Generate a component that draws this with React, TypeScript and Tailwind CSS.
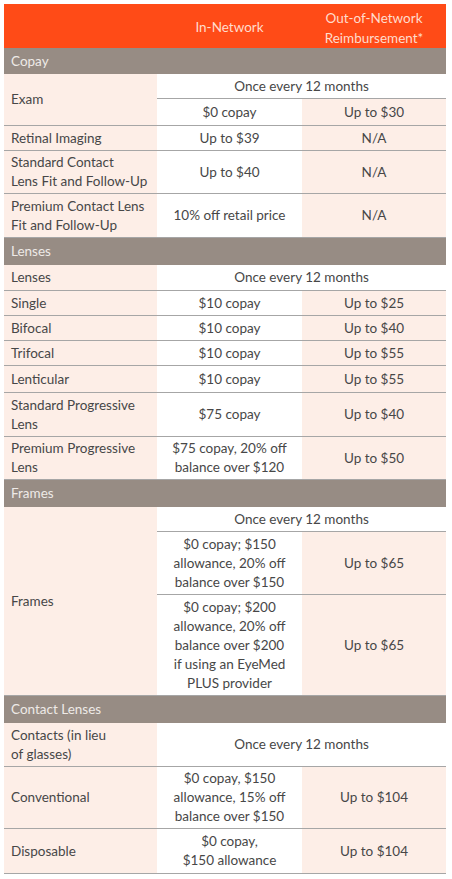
const font = { fontFamily: 'Lato, "Noto Sans", sans-serif' };

type Row = {
  label: string[];
  inNet: string[];
  outNet: string;
  h: string;
};

const Lines = ({ lines }: { lines: string[] }) => (
  <div className="whitespace-nowrap">
    {lines.map((l, i) => (
      <div key={i}>{l}</div>
    ))}
  </div>
);

const Section = ({ title, h }: { title: string; h: string }) => (
  <div className={`${h} bg-[#978c84] text-[#eeeae7] pl-[7px] flex items-center`}>{title}</div>
);

const DataRow = ({ label, inNet, outNet, h }: Row) => (
  <div className={`flex border-b border-[#a6a6a6] ${h}`}>
    <div className="w-[153px] bg-[#fdeee7] pl-[7px] flex items-center">
      <Lines lines={label} />
    </div>
    <div className="w-[145px] bg-white flex items-center justify-center text-center">
      <Lines lines={inNet} />
    </div>
    <div className="flex-1 bg-[#fdeee7] flex items-center justify-center text-center">{outNet}</div>
  </div>
);

const OnceRow = ({ label, h }: { label: string[]; h: string }) => (
  <div className={`flex border-b border-[#a6a6a6] ${h}`}>
    <div className="w-[153px] bg-[#fdeee7] pl-[7px] flex items-center">
      <Lines lines={label} />
    </div>
    <div className="flex-1 bg-white flex items-center justify-center">Once every 12 months</div>
  </div>
);

const copayRows: Row[] = [
  { label: ['Retinal Imaging'], inNet: ['Up to $39'], outNet: 'N/A', h: 'h-[25px]' },
  { label: ['Standard Contact', 'Lens Fit and Follow-Up'], inNet: ['Up to $40'], outNet: 'N/A', h: 'h-[43px]' },
  { label: ['Premium Contact Lens', 'Fit and Follow-Up'], inNet: ['10% off retail price'], outNet: 'N/A', h: 'h-[44px]' },
];

const lensRows: Row[] = [
  { label: ['Single'], inNet: ['$10 copay'], outNet: 'Up to $25', h: 'h-[25px]' },
  { label: ['Bifocal'], inNet: ['$10 copay'], outNet: 'Up to $40', h: 'h-[25px]' },
  { label: ['Trifocal'], inNet: ['$10 copay'], outNet: 'Up to $55', h: 'h-[25px]' },
  { label: ['Lenticular'], inNet: ['$10 copay'], outNet: 'Up to $55', h: 'h-[27px]' },
  { label: ['Standard Progressive', 'Lens'], inNet: ['$75 copay'], outNet: 'Up to $40', h: 'h-[44px]' },
  { label: ['Premium Progressive', 'Lens'], inNet: ['$75 copay, 20% off', 'balance over $120'], outNet: 'Up to $50', h: 'h-[43px]' },
];

const contactRows: Row[] = [
  {
    label: ['Conventional'],
    inNet: ['$0 copay, $150', 'allowance, 15% off', 'balance over $150'],
    outNet: 'Up to $104',
    h: 'h-[62px]',
  },
  { label: ['Disposable'], inNet: ['$0 copay,', '$150 allowance'], outNet: 'Up to $104', h: 'h-[45px]' },
];

export default function App() {
  return (
    <div className="w-[452px] h-[879px] bg-white pt-[4px] px-[4px]" style={font}>
      <div className="w-[442px] text-[13.5px] leading-[19px] text-[#474747]">
        {/* header */}
        <div className="flex h-[44px] bg-[#ff4b17] text-[#ffdccd]">
          <div className="w-[153px]" />
          <div className="w-[145px] flex items-center justify-center pt-[2px]">In-Network</div>
          <div className="flex-1 flex flex-col items-center justify-center leading-[20px] pt-[4px]">
            <span>Out-of-Network</span>
            <span>Reimbursement*</span>
          </div>
        </div>

        <Section title="Copay" h="h-[26px]" />
        <div className="flex h-[52px] border-b border-[#a6a6a6]">
          <div className="w-[153px] bg-[#fdeee7] pl-[7px] flex items-center">Exam</div>
          <div className="flex-1 flex flex-col">
            <div className="h-[25px] border-b border-[#a6a6a6] bg-white flex items-center justify-center">
              Once every 12 months
            </div>
            <div className="flex flex-1">
              <div className="w-[145px] bg-white flex items-center justify-center">$0 copay</div>
              <div className="flex-1 bg-[#fdeee7] flex items-center justify-center">Up to $30</div>
            </div>
          </div>
        </div>
        {copayRows.map((r) => (
          <DataRow key={r.label.join(' ')} {...r} />
        ))}

        <Section title="Lenses" h="h-[27px]" />
        <OnceRow label={['Lenses']} h="h-[26px]" />
        {lensRows.map((r) => (
          <DataRow key={r.label.join(' ')} {...r} />
        ))}

        <Section title="Frames" h="h-[27px]" />
        <div className="flex h-[189px] border-b border-[#a6a6a6]">
          <div className="w-[153px] bg-[#fdeee7] pl-[7px] flex items-center">Frames</div>
          <div className="flex-1 flex flex-col">
            <div className="h-[25px] border-b border-[#a6a6a6] bg-white flex items-center justify-center">
              Once every 12 months
            </div>
            <div className="flex h-[63px] border-b border-[#a6a6a6]">
              <div className="w-[145px] bg-white flex items-center justify-center text-center">
                <Lines lines={['$0 copay; $150', 'allowance, 20% off', 'balance over $150']} />
              </div>
              <div className="flex-1 bg-[#fdeee7] flex items-center justify-center">Up to $65</div>
            </div>
            <div className="flex flex-1">
              <div className="w-[145px] bg-white flex items-center justify-center text-center">
                <Lines
                  lines={['$0 copay; $200', 'allowance, 20% off', 'balance over $200', 'if using an EyeMed', 'PLUS provider']}
                />
              </div>
              <div className="flex-1 bg-[#fdeee7] flex items-center justify-center">Up to $65</div>
            </div>
          </div>
        </div>

        <Section title="Contact Lenses" h="h-[27px]" />
        <OnceRow label={['Contacts (in lieu', 'of glasses)']} h="h-[44px]" />
        {contactRows.map((r) => (
          <DataRow key={r.label.join(' ')} {...r} />
        ))}
      </div>
    </div>
  );
}
